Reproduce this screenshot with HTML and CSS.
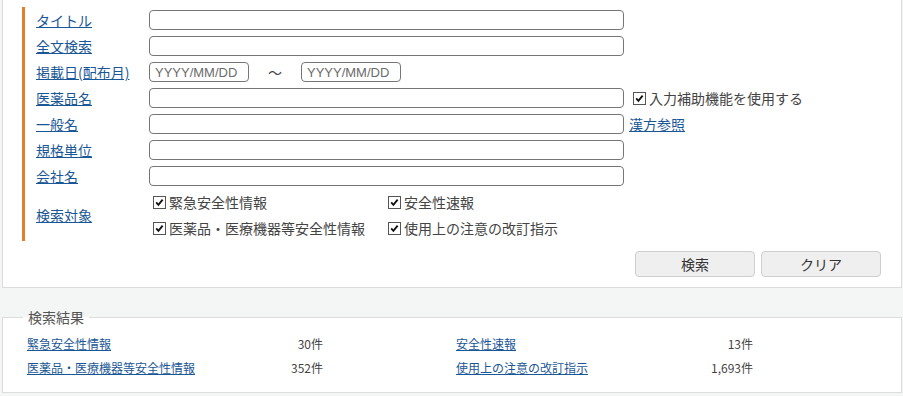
FILE: index.html
```html
<!DOCTYPE html>
<html lang="ja">

<head>
    <meta charset="UTF-8">
    <meta name="viewport" content="width=device-width, initial-scale=1.0">
    <title>安全性情報検索</title>
    <link rel="stylesheet" href="styles.css">
</head>

<body>
    <div class="panel">
        <div class="form">
            <div class="row">
                <a class="label" href="#">タイトル</a>
                <input class="text" type="text">
            </div>
            <div class="row">
                <a class="label" href="#">全文検索</a>
                <input class="text" type="text">
            </div>
            <div class="row">
                <a class="label" href="#">掲載日(配布月)</a>
                <input class="date" type="text" placeholder="YYYY/MM/DD">
                <span class="tilde">～</span>
                <input class="date" type="text" placeholder="YYYY/MM/DD">
            </div>
            <div class="row">
                <a class="label" href="#">医薬品名</a>
                <input class="text" type="text">
                <label class="check side"><span class="cb"><svg viewBox="0 0 13 13"><path d="M2.6 6.4 L5.2 9.2 L10.2 3.2" /></svg></span>入力補助機能を使用する</label>
            </div>
            <div class="row">
                <a class="label" href="#">一般名</a>
                <input class="text" type="text">
                <a class="side-link" href="#">漢方参照</a>
            </div>
            <div class="row">
                <a class="label" href="#">規格単位</a>
                <input class="text" type="text">
            </div>
            <div class="row">
                <a class="label" href="#">会社名</a>
                <input class="text" type="text">
            </div>
            <div class="row targets">
                <a class="label" href="#">検索対象</a>
                <div class="checks">
                    <label class="check"><span class="cb"><svg viewBox="0 0 13 13"><path d="M2.6 6.4 L5.2 9.2 L10.2 3.2" /></svg></span>緊急安全性情報</label>
                    <label class="check"><span class="cb"><svg viewBox="0 0 13 13"><path d="M2.6 6.4 L5.2 9.2 L10.2 3.2" /></svg></span>安全性速報</label>
                    <label class="check"><span class="cb"><svg viewBox="0 0 13 13"><path d="M2.6 6.4 L5.2 9.2 L10.2 3.2" /></svg></span>医薬品・医療機器等安全性情報</label>
                    <label class="check"><span class="cb"><svg viewBox="0 0 13 13"><path d="M2.6 6.4 L5.2 9.2 L10.2 3.2" /></svg></span>使用上の注意の改訂指示</label>
                </div>
            </div>
        </div>
        <div class="buttons">
            <button type="button">検索</button>
            <button type="button">クリア</button>
        </div>
    </div>

    <fieldset class="results">
        <legend>検索結果</legend>
        <div class="res-list">
            <div class="res-item"><a href="#">緊急安全性情報</a><span>30件</span></div>
            <div class="res-item"><a href="#">安全性速報</a><span>13件</span></div>
            <div class="res-item"><a href="#">医薬品・医療機器等安全性情報</a><span>352件</span></div>
            <div class="res-item"><a href="#">使用上の注意の改訂指示</a><span>1,693件</span></div>
        </div>
    </fieldset>
</body>

</html>
```

FILE: styles.css
```css
body {
    margin: 0;
    background-color: #f4f5f5;
    font-family: "Noto Sans CJK JP", "Liberation Sans", sans-serif;
    font-size: 14px;
    color: #444;
}

a {
    color: #1a5796;
    text-decoration: underline;
}

.panel {
    margin: 0 1px 0 2px;
    background-color: #fff;
    border: 1px solid #dcdcdc;
    border-top: none;
    padding: 7px 0 10px 0;
}

.form {
    margin-left: 19px;
    border-left: 3px solid #e0812b;
    padding-left: 11px;
}

.row {
    display: flex;
    align-items: center;
    height: 26px;
}

.label {
    flex: 0 0 113px;
    line-height: 18px;
}

.text {
    box-sizing: border-box;
    width: 475px;
    height: 20px;
    border: 1px solid #767676;
    border-radius: 4px;
    padding: 0 5px;
    margin: 0;
    font-family: "Liberation Sans", sans-serif;
    font-size: 13px;
}

.date {
    box-sizing: border-box;
    width: 100px;
    height: 20px;
    border: 1px solid #767676;
    border-radius: 4px;
    padding: 0 5px;
    margin: 0;
    font-family: "Liberation Sans", sans-serif;
    font-size: 13px;
}

.date::placeholder {
    color: #6b6b6b;
}

.tilde {
    width: 14px;
    margin: 0 19px;
    color: #444;
}

.check {
    display: flex;
    align-items: center;
    line-height: 18px;
    color: #444;
}

.cb {
    box-sizing: border-box;
    width: 13px;
    height: 13px;
    margin: 0 3px 0 4px;
    border: 1px solid #555;
    background-color: #fff;
}

.cb svg {
    display: block;
    width: 11px;
    height: 11px;
}

.cb path {
    fill: none;
    stroke: #111;
    stroke-width: 2.2;
}

.side {
    margin-left: 5px;
}

.side-link {
    margin-left: 5px;
    line-height: 18px;
}

.targets {
    height: 52px;
}

.checks {
    display: grid;
    grid-template-columns: 235px auto;
    grid-auto-rows: 26px;
}

.buttons {
    display: flex;
    justify-content: flex-end;
    gap: 6px;
    margin: 10px 20px 0 0;
}

.buttons button {
    width: 120px;
    height: 26px;
    background-color: #efefef;
    border: 1px solid #cfcfcf;
    border-radius: 4px;
    font-family: "Noto Sans CJK JP", sans-serif;
    font-size: 14px;
    color: #333;
    padding: 0;
}

.results {
    margin: 20px 1px 0 2px;
    padding: 5px 0 13px 20px;
    border: 1px solid #dcdcdc;
    background-color: #fff;
    min-width: 0;
}

.results legend {
    padding: 0 5px;
    line-height: 18px;
    color: #555;
}

.res-list {
    display: grid;
    grid-template-columns: 296px 297px;
    column-gap: 133px;
    grid-auto-rows: 24px;
    padding-left: 4px;
    font-size: 12px;
}

.res-item {
    display: flex;
    justify-content: space-between;
    align-items: center;
}
```
